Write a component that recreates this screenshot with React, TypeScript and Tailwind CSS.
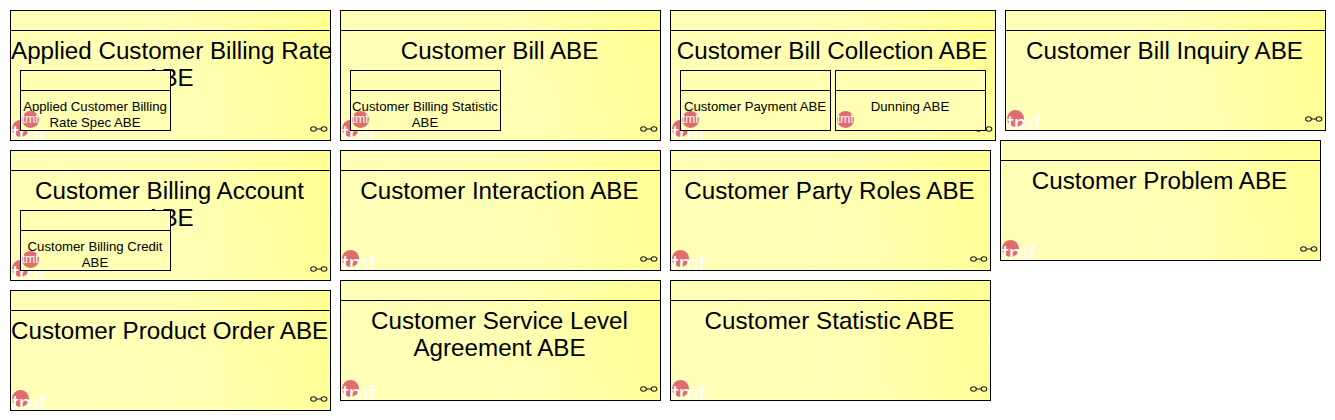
const FONT = "font-['Liberation_Sans',Arial,sans-serif]";

type Child = { x: number; label: string };
type Node = { x: number; y: number; w: number; h: number; label: string; kids?: Child[] };

const nodes: Node[] = [
  { x: 10, y: 10, w: 321, h: 131, label: 'Applied Customer Billing Rate\nABE', kids: [{ x: 9, label: 'Applied Customer Billing\nRate Spec ABE' }] },
  { x: 340, y: 10, w: 321, h: 131, label: 'Customer Bill ABE', kids: [{ x: 9, label: 'Customer Billing Statistic\nABE' }] },
  { x: 670, y: 10, w: 326, h: 131, label: 'Customer Bill Collection ABE', kids: [{ x: 9, label: 'Customer Payment ABE' }, { x: 164, label: 'Dunning ABE' }] },
  { x: 1005, y: 10, w: 321, h: 121, label: 'Customer Bill Inquiry ABE' },
  { x: 10, y: 150, w: 321, h: 131, label: 'Customer Billing Account\nABE', kids: [{ x: 9, label: 'Customer Billing Credit\nABE' }] },
  { x: 340, y: 150, w: 321, h: 121, label: 'Customer Interaction ABE' },
  { x: 670, y: 150, w: 321, h: 121, label: 'Customer Party Roles ABE' },
  { x: 1000, y: 140, w: 321, h: 121, label: 'Customer Problem ABE' },
  { x: 10, y: 290, w: 321, h: 121, label: 'Customer Product Order ABE' },
  { x: 340, y: 280, w: 321, h: 121, label: 'Customer Service Level\nAgreement ABE' },
  { x: 670, y: 280, w: 321, h: 121, label: 'Customer Statistic ABE' },
];

function LinkIcon() {
  return (
    <svg width="18" height="8" viewBox="0 0 18 8" className="absolute right-[2px] bottom-[7px]">
      <ellipse cx="3.5" cy="4" rx="2.8" ry="2.2" fill="none" stroke="#222" strokeWidth="1.1" />
      <ellipse cx="14" cy="4" rx="2.8" ry="2.2" fill="none" stroke="#222" strokeWidth="1.1" />
      <line x1="6" y1="4" x2="11.5" y2="4" stroke="#222" strokeWidth="1.1" />
    </svg>
  );
}

function Logo({ small }: { small?: boolean }) {
  if (small) {
    return (
      <div className="absolute left-[1px] bottom-[2px] w-[17px] h-[17px] rounded-full bg-[#e06c70] text-white text-[12px] leading-[17px] whitespace-nowrap">
        tmf
      </div>
    );
  }
  return (
    <div className="absolute left-[1px] bottom-0 h-[20px] w-[40px] overflow-hidden">
      <div className="absolute left-0 top-0 w-[17px] h-[17px] rounded-full bg-[#e06c70]" />
      <span className="absolute left-0 top-0 text-white text-[24px] leading-[27px]">tmf</span>
    </div>
  );
}

function SubBox({ x, label }: Child) {
  return (
    <div
      className="absolute top-[59px] w-[151px] h-[61px] border border-black bg-[#ffffb4] flex flex-col"
      style={{ left: x }}
    >
      <div className="h-[20px] shrink-0 border-b border-black" />
      <div className="text-[13.2px] leading-[16px] text-center text-black pt-[8px] pr-[1px] whitespace-pre">{label}</div>
      <Logo small />
    </div>
  );
}

export default function App() {
  return (
    <div className={`relative w-[1335px] h-[420px] bg-white overflow-hidden ${FONT}`}>
      {nodes.map((n) => (
        <div
          key={n.label}
          className="absolute border border-black bg-[linear-gradient(80deg,#ffffb8_0%,#ffffb4_55%,#ffff92_100%)] flex flex-col"
          style={{ left: n.x, top: n.y, width: n.w, height: n.h }}
        >
          <div className="h-[20px] shrink-0 border-b border-black" />
          <div className="text-[24.2px] leading-[27px] text-center text-black pt-[6px] pr-[2px] whitespace-pre">{n.label}</div>
          <Logo />
          <LinkIcon />
          {n.kids?.map((k) => <SubBox key={k.label} {...k} />)}
        </div>
      ))}
    </div>
  );
}
